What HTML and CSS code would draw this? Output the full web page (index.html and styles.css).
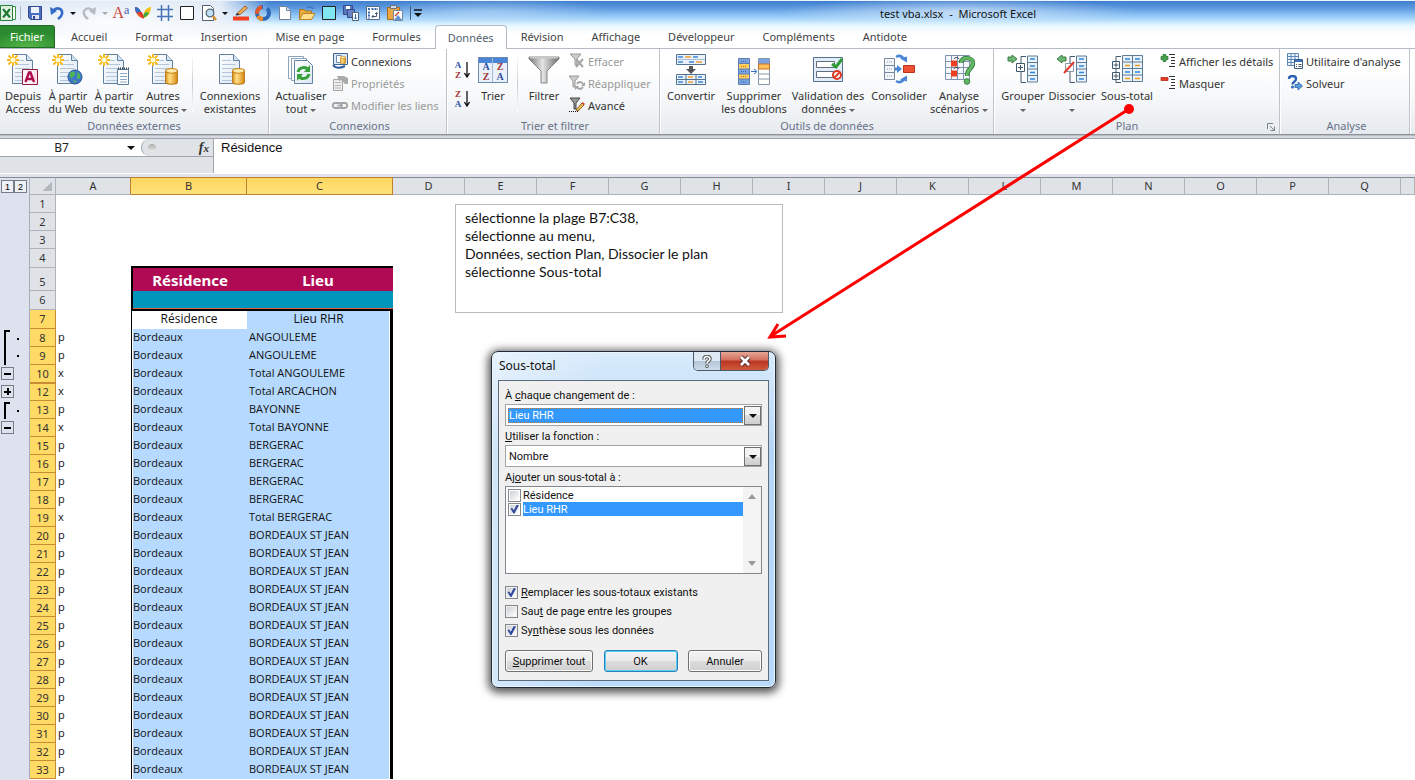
FILE: index.html
```html
<!DOCTYPE html>
<html lang="fr">
<head>
<meta charset="utf-8">
<title>test vba.xlsx - Microsoft Excel</title>
<link rel="stylesheet" href="styles.css">
</head>
<body>
<svg class="defs" aria-hidden="true">
  <defs>
    <linearGradient id="g-page" x1="0" y1="0" x2="1" y2="1"><stop offset="0" stop-color="#fff"/><stop offset="1" stop-color="#dbe7f3"/></linearGradient>
    <linearGradient id="g-gold" x1="0" x2="1" y1="0" y2="0"><stop offset="0" stop-color="#e09a20"/><stop offset=".35" stop-color="#ffe08a"/><stop offset="1" stop-color="#d88a10"/></linearGradient>
    <linearGradient id="g-grey" x1="0" x2="1" y1="0" y2="0"><stop offset="0" stop-color="#777"/><stop offset=".45" stop-color="#e4e4e4"/><stop offset="1" stop-color="#6c6c6c"/></linearGradient>
    <symbol id="page" viewBox="0 0 32 32">
      <path d="M5.500.5h14l6 6v23h-20z" fill="url(#g-page)" stroke="#64829f"/>
      <path d="M19.500.5v6h6" fill="#d5e3f0" stroke="#64829f"/>
      <path d="M8 6.500h9M8 10.500h14M8 14.500h14M8 18.500h14M8 22.500h14M8 26.500h14" stroke="#b3c6dc"/>
    </symbol>
    <symbol id="burst" viewBox="0 0 12 12">
      <path d="M6 0v12M0 6h12M1.500 1.500l9 9M10.500 1.500l-9 9" stroke="#f7b91c" stroke-width="2"/>
      <circle cx="6" cy="6" r="2.500" fill="#fffbd0"/>
    </symbol>
    <symbol id="drum" viewBox="0 0 12 16">
      <path d="M.5 2.500v11c0 2.500 11 2.500 11 0v-11z" fill="url(#g-gold)" stroke="#b87410"/>
      <ellipse cx="6" cy="2.700" rx="5.500" ry="2.200" fill="#ffe9a8" stroke="#c98518"/>
    </symbol>
    <symbol id="funnel" viewBox="0 0 32 32">
      <path d="M1 3h30v2L19 17v12h-6V17L1 5z" fill="url(#g-grey)" stroke="#888"/>
      <path d="M2 3.500h28" stroke="#c8c8c8" stroke-width="2"/>
    </symbol>
    <symbol id="rows" viewBox="0 0 11 27">
      <path d="M.5.5h10v26H.5zM.5 7h10M.5 13.500h10M.5 20h10" fill="#e9f1fa" stroke="#5f7c96"/>
      <path d="M3 3.500h5M3 10.500h5M3 17h5M3 23.500h5" stroke="#2f86dc" stroke-width="1.400"/>
    </symbol>
  </defs>
</svg>

<div class="app">
  <header class="top">
    <div class="titlebar">
      <nav class="quick" aria-label="Accès rapide">
        <button class="q first" aria-label="Excel"><svg width="16" height="16"><path d="M12 1.500h3.500v13H12z" fill="#fff" stroke="#3a9a46"/><path d="M.5.5h12v15H.5z" fill="#d9efd9" stroke="#2a8038"/><path d="M2.500 3.500l8 9.500M10.500 3.500l-8 9.500" stroke="#fff" stroke-width="4"/><path d="M3 4l7 8.500M10 4l-7 8.500" stroke="#1f7c35" stroke-width="2.400"/></svg></button>
        <i class="bar"></i>
        <button class="q" aria-label="Enregistrer"><svg width="16" height="16"><path d="M1.500 1.500h13v13h-11l-2-2z" fill="#4d6fc0" stroke="#31498c"/><path d="M4 2h8v6H4z" fill="#eef3fc"/><path d="M5 10h7v4H5z" fill="#dfe6f2"/><path d="M6 11h2v3H6z" fill="#31498c"/></svg></button>
        <button class="q split" aria-label="Annuler"><svg width="16" height="16"><path d="M4 6c4-5 10-2 9 3-.6 3-3 4-4 5" fill="none" stroke="#3469c6" stroke-width="2.600"/><path d="M1 2l1 8 6-4z" fill="#3469c6"/></svg><span class="caret dark"></span></button>
        <button class="q split" aria-label="Rétablir"><svg width="16" height="16"><path d="M12 6c-4-5-10-2-9 3 .6 3 3 4 4 5" fill="none" stroke="#b5bac2" stroke-width="2.400"/><path d="M15 2l-1 8-6-4z" fill="#b5bac2"/></svg><span class="caret pale"></span></button>
        <button class="q aa" aria-label="Police">A<sup>a</sup></button>
        <button class="q" aria-label="Papillon"><svg width="18" height="16"><path d="M8 13C4 12 0 6 1 2c4 0 6 4 7 8z" fill="#ee5a2a"/><path d="M1 2c3 0 5 2 6 5L3 8C1 6 1 4 1 2z" fill="#2f72c8"/><path d="M9 13c0-6 3-11 8-11 0 4-2 10-8 11z" fill="#f5c21b"/><path d="M9 13c3-1 5-3 6-5l-3-1c-2 1-3 3-3 6z" fill="#3da645"/><path d="M4 7l5 7 1-1-2-6z" fill="#e0352a"/></svg></button>
        <button class="q" aria-label="Quadrillage"><svg width="16" height="16"><path d="M4.500 0v16M11.500 0v16M0 4.500h16M0 11.500h16" stroke="#4475b5" stroke-width="1.500"/></svg></button>
        <button class="q" aria-label="Bordure"><svg width="16" height="16"><path d="M1.500 1.500h13v13h-13z" fill="#fff" stroke="#222"/></svg></button>
        <button class="q split" aria-label="Aperçu"><svg width="16" height="16"><path d="M1.500.5h8l3 3v12h-11z" fill="#fff" stroke="#555f70"/><circle cx="9" cy="8" r="3.800" fill="#bfe0f7" stroke="#5a6675" stroke-width="1.300"/><path d="M12 11l3 4" stroke="#d89030" stroke-width="2.500"/></svg><span class="caret dark"></span></button>
        <button class="q" aria-label="Couleur"><svg width="18" height="16"><path d="M1 11.500h16v4H1z" fill="#f2401e"/><path d="M5 8.500L13 1l2.500 2L8 9.500z" fill="#f4b25a" stroke="#9a5e28"/><path d="M3.500 10.500l1.500-2.500 2.500 2z" fill="#222"/></svg></button>
        <button class="q" aria-label="Graphique"><svg width="18" height="16"><circle cx="9" cy="8" r="6" fill="none" stroke="#2d67b8" stroke-width="4"/><path d="M9 2a6 6 0 0 1 4 1.500" fill="none" stroke="#6aa5e4" stroke-width="4"/><path d="M9 14a6 6 0 0 1-5-3" fill="none" stroke="#f08a28" stroke-width="4"/><path d="M3.200 9A6 6 0 0 1 8 2" fill="none" stroke="#e2582a" stroke-width="4"/></svg></button>
        <button class="q" aria-label="Nouveau"><svg width="16" height="16"><path d="M2.500 1.500h7l4 4v9h-11z" fill="#fff" stroke="#71819a"/><path d="M9.500 1.500v4h4" fill="#dbe4ef" stroke="#71819a"/></svg></button>
        <button class="q" aria-label="Ouvrir"><svg width="18" height="16"><path d="M1.500 14V4.500h5l1 1.500h6V14z" fill="#e8a93c" stroke="#a87422"/><path d="M1.500 14.500L5 8.500h12l-3.500 6z" fill="#ffdf8c" stroke="#b98328"/><path d="M9 3c2-2 5-1 6 1" fill="none" stroke="#3f72c4" stroke-width="1.500"/></svg></button>
        <button class="q" aria-label="Remplissage"><svg width="16" height="16"><path d="M1.500 1.500h13v13h-13z" fill="#7fe6f2" stroke="#222"/></svg></button>
        <button class="q" aria-label="Enregistrer sous"><svg width="16" height="16"><path d="M.5.5h9v9h-9z" fill="#5a74b8" stroke="#33498a"/><path d="M3 1h4v3H3z" fill="#fff"/><path d="M4.500 4.500h7v8h-7z" fill="#6a83c4" stroke="#33498a"/><path d="M9.500 7.500h6v8h-6z" fill="#fff" stroke="#4d5f7a"/><path d="M12.500 9v5M11 12.500l1.500 1.500 1.500-1.500" stroke="#3268b8" fill="none"/></svg></button>
        <button class="q" aria-label="Tableau croisé"><svg width="16" height="16"><path d="M1.500 1.500h13v13h-13z" fill="#fff" stroke="#566a8c"/><path d="M3 4h2M6.500 4H13M4 6.500v7" stroke="#3c69ad" stroke-width="2" stroke-dasharray="2 1"/><path d="M7 11.500h4.500V8M10 9l1.500-1.500L13 9M8.500 10L7 11.500 8.500 13" fill="none" stroke="#475b7c"/></svg></button>
        <button class="q" aria-label="Coller"><svg width="16" height="16"><path d="M.5 2.500h12v12H.5z" fill="#e9a745" stroke="#a56c1e"/><path d="M3.500.5h6v3h-6z" fill="#d5dbe4" stroke="#687485"/><path d="M6.500 5.500h9v10h-9z" fill="#fff" stroke="#7486a0"/><path d="M7 15l4-5 4 5z" fill="#5f8fd0"/><path d="M8 11l4-4" stroke="#c94b32" stroke-width="1.500"/></svg></button>
        <i class="bar dark"></i>
        <button class="q more" aria-label="Personnaliser"><svg width="8" height="8"><path d="M0 1h8" stroke="#111" stroke-width="1.500"/><path d="M0 4h8L4 8z" fill="#111"/></svg></button>
      </nav>
      <h1 class="title">test vba.xlsx&nbsp; -&nbsp; Microsoft Excel</h1>
    </div>
    <nav class="tabs" aria-label="Ruban">
      <button class="tab file">Fichier</button>
      <button class="tab">Accueil</button>
      <button class="tab">Format</button>
      <button class="tab">Insertion</button>
      <button class="tab">Mise en page</button>
      <button class="tab">Formules</button>
      <button class="tab active">Données</button>
      <button class="tab">Révision</button>
      <button class="tab">Affichage</button>
      <button class="tab">Développeur</button>
      <button class="tab">Compléments</button>
      <button class="tab">Antidote</button>
    </nav>
  </header>

  <section class="ribbon">
    <div class="group g-ext">
      <div class="body">
        <button class="big w46"><svg width="32" height="32"><use href="#page"/><use href="#burst" width="12" height="12"/><path d="M15.500 15.500h15v15h-15z" fill="#fbe0ea" stroke="#8e1d40"/><path d="M16 16h11v14H16z" fill="#fff" opacity=".6"/><path d="M18.500 28L22 18.500h1.500L27 28M20 25h5.500" fill="none" stroke="#b00d4c" stroke-width="2.400"/></svg><span>Depuis<br>Access</span></button>
        <button class="big w44"><svg width="32" height="32"><use href="#page"/><use href="#burst" width="12" height="12"/><circle cx="23" cy="23" r="7" fill="#3f78c8" stroke="#2a559b"/><path d="M18 19c3-3 5-1 5 1s-2 2-3 4-3-2-2-5zM25 18c3 1 4 4 3 6s-3 1-3-1 1-3 0-5zM21 26l4 1-2 2z" fill="#4fb454"/></svg><span>À partir<br>du Web</span></button>
        <button class="big w48"><svg width="32" height="32"><use href="#page"/><use href="#burst" width="12" height="12"/><path d="M19.500 15.500h11v15h-11z" fill="#fff" stroke="#5f7f9f"/><path d="M22 19.500h7M22 22.500h7M22 25.500h7M22 28h7" stroke="#8ba6c4"/><path d="M20 14.500h11" stroke="#444" stroke-width="2" stroke-dasharray="1 1"/></svg><span>À partir<br>du texte</span></button>
        <button class="big w50"><svg width="32" height="32"><use href="#page"/><use href="#burst" width="12" height="12"/><use href="#drum" x="18" y="14" width="13" height="17"/></svg><span>Autres<br>sources <i class="caret"></i></span></button>
        <i class="sep"></i>
        <button class="big w66"><svg width="32" height="32"><use href="#page"/><use href="#drum" x="18" y="14" width="13" height="17"/></svg><span>Connexions<br>existantes</span></button>
      </div>
      <h2>Données externes</h2>
    </div>

    <div class="group g-cnx">
      <div class="body">
        <button class="big w56"><svg width="32" height="32"><path d="M3.500 2.500h15v22h-15z" fill="#fff" stroke="#8ca2ba"/><path d="M6.500 4.500h15v22h-15z" fill="#fff" stroke="#8ca2ba"/><path d="M9.500 6.500h13l5 5v18h-18z" fill="url(#g-page)" stroke="#64829f"/><path d="M13 18c1-5 8-6 10-2M24 20c-1 5-8 6-10 2" fill="none" stroke="#37a03a" stroke-width="3"/><path d="M25 11v7h-6zM12 27v-7h6z" fill="#37a03a"/></svg><span>Actualiser<br>tout <i class="caret"></i></span></button>
        <div class="stack">
          <button class="small"><svg width="16" height="16"><path d="M1.500.5h14v11h-14z" fill="#dce9f7" stroke="#3f6590"/><path d="M4.500 2.500h5v7h-5z" fill="#fff" stroke="#6c8db0"/><use href="#drum" x="8" y="3" width="6" height="8"/><path d="M1 12c3 4 8 3 12 1" fill="none" stroke="#2d5f9d" stroke-width="2"/></svg>Connexions</button>
          <button class="small" disabled><svg width="16" height="16"><path d="M1.500 4.500h9v11h-9z" fill="#eee" stroke="#a5a5a5"/><path d="M3 7.500h6M3 10.500h6M3 13h6" stroke="#b5b5b5"/><path d="M5 1h7l4 2v6h-3L9 5 7 6z" fill="#ababab"/></svg>Propriétés</button>
          <button class="small" disabled><svg width="16" height="16"><path d="M3 6h4c3 0 3 5 0 5H3C0 11 0 6 3 6M9 6h4c3 0 3 5 0 5H9" fill="none" stroke="#a3a3a3" stroke-width="1.800"/><path d="M5 8.500h6" stroke="#aaa" stroke-width="1.500"/></svg>Modifier les liens</button>
        </div>
      </div>
      <h2>Connexions</h2>
    </div>

    <div class="group g-sort">
      <div class="body">
        <div class="sorts">
          <button class="az" aria-label="Trier de A à Z"><span><b class="bl">A</b><b class="rd">Z</b></span><svg width="6" height="16"><path d="M3 0v14M.5 11L3 15l2.500-4" fill="none" stroke="#111" stroke-width="1.300"/></svg></button>
          <button class="az" aria-label="Trier de Z à A"><span><b class="rd">Z</b><b class="bl">A</b></span><svg width="6" height="16"><path d="M3 0v14M.5 11L3 15l2.500-4" fill="none" stroke="#111" stroke-width="1.300"/></svg></button>
        </div>
        <button class="big w40"><span class="azbox"><b class="bl">A</b><b class="rd">Z</b><b class="rd">Z</b><b class="bl">A</b></span><span>Trier</span></button>
        <i class="sep"></i>
        <button class="big w44"><svg width="32" height="32"><use href="#funnel"/></svg><span>Filtrer</span></button>
        <div class="stack">
          <button class="small" disabled><svg width="16" height="16"><path d="M1 1h11L8 6v6H6V6z" fill="#ccc" stroke="#999"/><path d="M7 6l7 8M14 6l-7 8" stroke="#a5a5a5" stroke-width="2"/></svg>Effacer</button>
          <button class="small" disabled><svg width="16" height="16"><path d="M0 1h10L6 6v6H4V6z" fill="#ccc" stroke="#999"/><path d="M8 9c2-3 5-2 6 0M14 12c-2 3-5 2-6 0" fill="none" stroke="#a5a5a5" stroke-width="2"/><path d="M16 7v4h-4zM6 15v-4h4z" fill="#a5a5a5"/></svg>Réappliquer</button>
          <button class="small"><svg width="16" height="16"><path d="M1 1h10L7 6v6H5V6z" fill="#999" stroke="#444"/><path d="M7 13l6-7 2 2-6 6z" fill="#f4c05a" stroke="#8c5c1c"/><path d="M13 6l1-1 2 2-1 1z" fill="#d8433a"/><path d="M0 14.500h10" stroke="#111" stroke-dasharray="1 1"/></svg>Avancé</button>
        </div>
      </div>
      <h2>Trier et filtrer</h2>
    </div>

    <div class="group g-tools">
      <div class="body">
        <button class="big w60"><svg width="32" height="32"><path d="M1.500.5h29v10h-29z" fill="#eaf2fb" stroke="#55718f"/><path d="M2 5.500h28" stroke="#a8bdd3"/><path d="M3 3h5M18 3h5M3 8h5M14 8h5" stroke="#3a87dc" stroke-width="1.500"/><path d="M10 3h6M21 8h6" stroke="#f0a030" stroke-width="1.500"/><path d="M14 12h4v3h3l-5 5-5-5h3z" fill="#555"/><path d="M1.500 20.500h29v10h-29zM1.500 25.500h29M11 20.500v10M21 20.500v10" fill="#eaf2fb" stroke="#55718f"/><path d="M3 23h5M23 23h4M3 28h5M23 28h5" stroke="#3a87dc" stroke-width="1.500"/><path d="M13 23h5M13 28h5" stroke="#f0a030" stroke-width="1.500"/></svg><span>Convertir</span></button>
        <button class="big w66"><svg width="32" height="32"><path d="M.5 4.500h11v26h-11z" fill="#7ba3e0" stroke="#5e7db0"/><path d="M1 10h10v5H1zM1 20h10v5H1z" fill="#ffd05c"/><path d="M.5 9.500h11M.5 15h11M.5 20h11M.5 25h11" stroke="#5e7db0"/><path d="M3 7.500h6M3 17.500h6M3 28h6" stroke="#3f62a8" stroke-dasharray="1 1"/><path d="M3 12.500h6M3 22.500h6" stroke="#b87a1c" stroke-dasharray="1 1"/><path d="M13 17.500h5M16 15l3 2.500-3 2.500" fill="none" stroke="#3771c8"/><path d="M20.500 4.500h11v26h-11z" fill="#fff" stroke="#8796a8"/><path d="M21 5h10v5H21z" fill="#7ba3e0"/><path d="M20.500 10h11v5h-11z" fill="#ffc05a" stroke="#c9702c"/><path d="M20.500 20h11M20.500 25h11" stroke="#8796a8"/></svg><span>Supprimer<br>les doublons</span></button>
        <button class="big w82"><svg width="32" height="32"><path d="M1.500 3.500h29v24h-29z" fill="#e3edf7" stroke="#55718f"/><path d="M4.500 7.500h18v6h-18zM4.500 17.500h18v6h-18z" fill="#fff" stroke="#5e6e80"/><path d="M20 10l4 3 6-8" fill="none" stroke="#2c9a35" stroke-width="3"/><circle cx="25" cy="21" r="4" fill="#fff" stroke="#dd3a24" stroke-width="2"/><path d="M22 24l6-6" stroke="#dd3a24" stroke-width="2"/></svg><span>Validation des<br>données <i class="caret"></i></span></button>
        <button class="big w60"><svg width="32" height="32"><path d="M1.500 4.500h10v21h-10zM1.500 11.500h10M1.500 18.500h10" fill="#f3f6fa" stroke="#7687a0"/><path d="M4 8h6M4 15h6M4 22h6" stroke="#8c9cb2" stroke-dasharray="1 1"/><path d="M12 13.500h2V11l5 4-5 4v-2.500h-2z" fill="#4b86d6"/><path d="M20.500 11.500h11v7h-11z" fill="#ef5135" stroke="#b83420"/><path d="M13 3c3-2 6-1 8 2M13 27c3 2 6 1 8-2" fill="none" stroke="#4b86d6" stroke-width="2.600"/><path d="M17 4.500l7-2v6zM17 25.500l7 2v-6z" fill="#4b86d6"/></svg><span>Consolider</span></button>
        <button class="big w60"><svg width="32" height="32"><path d="M2.500 1.500h24v24h-24zM2.500 7.500h24M2.500 13.500h24M2.500 19.500h24M8.500 1.500v24M14.500 1.500v24M20.500 1.500v24" fill="#f5f8fc" stroke="#8192ae"/><path d="M8 6.500h6v6H8zM8 16.500h6v6H8z" fill="#ee3f22"/><path d="M11 5c1-2 4-2 5 0M11 15c1-2 4-2 5 0" fill="none" stroke="#333"/><path d="M18 9c0-7 12-6 12 0 0 6-6 5-6 13" fill="none" stroke="#377f3a" stroke-width="4.500"/><path d="M18 9c0-7 12-6 12 0 0 6-6 5-6 13" fill="none" stroke="#62b966" stroke-width="2.800"/><circle cx="24" cy="27.500" r="2.800" fill="#62b966" stroke="#377f3a"/></svg><span>Analyse<br>scénarios <i class="caret"></i></span></button>
      </div>
      <h2>Outils de données</h2>
    </div>

    <div class="group g-plan">
      <div class="body">
        <button class="big w48"><svg width="32" height="32"><path d="M1 3h4V1l5 4-5 4V7H1z" fill="#6fb573" stroke="#3a7d40"/><path d="M19 2.500h-5v7M14 17v11.500h5" fill="none" stroke="#42596e"/><path d="M9.500 9.500h8v8h-8z" fill="#fff" stroke="#42596e"/><path d="M11 13.500h5M13.500 11v5" stroke="#42596e"/><use href="#rows" x="20" y="1" width="11" height="28"/></svg><span>Grouper<br><i class="caret"></i></span></button>
        <button class="big w50"><svg width="32" height="32"><path d="M10 3H6V1L1 5l5 4V7h4z" fill="#6fb573" stroke="#3a7d40"/><path d="M19 2.500h-5v7M14 17v11.500h5" fill="none" stroke="#42596e"/><path d="M9.500 9.500h8v8h-8z" fill="#fff" stroke="#8796a8"/><path d="M8 19L18 8" stroke="#e33a2b" stroke-width="2"/><use href="#rows" x="20" y="1" width="11" height="28"/></svg><span>Dissocier<br><i class="caret"></i></span></button>
        <button class="big w60"><svg width="32" height="32"><path d="M10 2.500H5v5M5 15v4M5 26v2.500h5" fill="none" stroke="#42596e"/><path d="M1.500 7.500h7v7h-7zM1.500 18.500h7v7h-7z" fill="#fff" stroke="#42596e"/><path d="M2.500 11h5M5 8.500v5M2.500 22h5M5 19.500v5" stroke="#42596e"/><path d="M11.500 1.500h20v26h-20zM11.500 8h20M11.500 14.500h20M11.500 21h20M21.500 1.500v26" fill="#e9f1fa" stroke="#5f7c96"/><path d="M14 5h5M24 5h5M14 18h5M24 18h5" stroke="#2f86dc" stroke-width="1.400"/><path d="M14 11.500h5M24 11.500h5M14 24.500h5M24 24.500h5" stroke="#eb9b24" stroke-width="1.600"/></svg><span>Sous-total</span></button>
        <div class="stack">
          <button class="small"><svg width="16" height="16"><path d="M3 1.500h3v2h2v3H6v2H3v-2H1v-3h2z" fill="#4aa24d" stroke="#2f7a36" stroke-width=".8"/><path d="M9 1.500h6M11 4.500h4M11 7.500h4M11 10.500h4M9 13.500h6" stroke="#333"/></svg>Afficher les détails</button>
          <button class="small"><svg width="16" height="16"><path d="M1 2.500h7v3H1z" fill="#e83a24" stroke="#b12a1a" stroke-width=".8"/><path d="M9 1.500h6M11 4.500h4M11 7.500h4M11 10.500h4M9 13.500h6" stroke="#333"/></svg>Masquer</button>
        </div>
      </div>
      <h2>Plan</h2>
      <button class="launch" aria-label="Paramètres du plan"><svg width="8" height="8"><path d="M.5 6V.5H6M3 3l4 4M7.500 3.500v4h-4" fill="none" stroke="#7c8490"/></svg></button>
    </div>

    <div class="group g-ana">
      <div class="body">
        <div class="stack">
          <button class="small"><svg width="16" height="16"><path d="M.5.5h11v12H.5zM.5 3.500h11M.5 6.500h11M.5 9.500h11M4 .5v12M8 .5v12" fill="#eff5fc" stroke="#5f86b5"/><path d="M7.500 6.500h8v9h-8z" fill="#fff" stroke="#3a5f8f"/><path d="M8 8h7" stroke="#3a6fc0" stroke-width="2"/><path d="M9 11.500h1M11.500 11.500h3M9 13.500h1M11.500 13.500h3" stroke="#555"/></svg>Utilitaire d'analyse</button>
          <button class="small"><svg width="16" height="16"><path d="M2 4c0-4 7-4 7 0 0 3-3.500 2.500-3.500 5.500" fill="none" stroke="#2c62b5" stroke-width="2.400"/><circle cx="5.500" cy="12" r="1.500" fill="#2c62b5"/><path d="M8 9.500h3V7l4.500 4-4.500 4v-2.500H8z" fill="#5b9be0" stroke="#2a5ca5" stroke-width=".8"/></svg>Solveur</button>
        </div>
      </div>
      <h2>Analyse</h2>
    </div>
  </section>

  <section class="formula">
    <div class="namebox">
      <input type="text" value="B7" aria-label="Zone Nom">
      <span class="caret dark"></span>
      <div class="fx"><i></i><button aria-label="Insérer une fonction"><em>f</em><small>x</small></button></div>
    </div>
    <input class="fbar" type="text" value="Résidence" aria-label="Barre de formule">
  </section>

  <main class="sheet">
    <table class="grid">
      <colgroup><col class="c-out"><col class="c-num"><col class="c-a"><col class="c-b"><col class="c-c"><col class="c-s" span="14"><col></colgroup>
      <thead>
        <tr><th class="levels"><div><button>1</button><button>2</button></div></th><th class="corner"></th><th class="pre">A</th><th class="on">B</th><th class="on">C</th><th>D</th><th>E</th><th>F</th><th>G</th><th>H</th><th>I</th><th>J</th><th>K</th><th>L</th><th>M</th><th>N</th><th>O</th><th>P</th><th>Q</th><th></th></tr>
      </thead>
      <tbody>
        <tr><td class="out"></td><th>1</th><td colspan="3"></td><td colspan="15"></td></tr>
        <tr><td class="out"></td><th>2</th><td colspan="3"></td><td colspan="15"></td></tr>
        <tr><td class="out"></td><th>3</th><td colspan="3"></td><td colspan="15"></td></tr>
        <tr class="h19"><td class="out"></td><th>4</th><td></td><td colspan="2" class="edge"></td><td colspan="15"></td></tr>
        <tr class="h23"><td class="out"></td><th>5</th><td></td><td class="hd left">Résidence</td><td class="hd lieu">Lieu</td><td colspan="15"></td></tr>
        <tr class="h19"><td class="out"></td><th>6</th><td></td><td class="teal left"></td><td class="teal"></td><td colspan="15"></td></tr>
        <tr class="h19 sel lead"><td class="out"></td><th>7</th><td></td><td>Résidence</td><td>Lieu RHR</td><td colspan="15"></td></tr>
        <tr class="sel"><td class="out"><div class="br start"><i></i></div></td><th>8</th><td>p</td><td>Bordeaux</td><td>ANGOULEME</td><td colspan="15"></td></tr>
        <tr class="sel"><td class="out"><div class="br"><i></i></div></td><th>9</th><td>p</td><td>Bordeaux</td><td>ANGOULEME</td><td colspan="15"></td></tr>
        <tr class="sel"><td class="out"><button class="pm" aria-label="Réduire"></button></td><th>10</th><td>x</td><td>Bordeaux</td><td>Total ANGOULEME</td><td colspan="15"></td></tr>
        <tr class="sel"><td class="out"><button class="pm plus" aria-label="Développer"></button></td><th class="cut">12</th><td>x</td><td>Bordeaux</td><td>Total ARCACHON</td><td colspan="15"></td></tr>
        <tr class="sel"><td class="out"><div class="br start"><i></i></div></td><th>13</th><td>p</td><td>Bordeaux</td><td>BAYONNE</td><td colspan="15"></td></tr>
        <tr class="sel"><td class="out"><button class="pm" aria-label="Réduire"></button></td><th>14</th><td>x</td><td>Bordeaux</td><td>Total BAYONNE</td><td colspan="15"></td></tr>
        <tr class="sel"><td class="out"></td><th>15</th><td>p</td><td>Bordeaux</td><td>BERGERAC</td><td colspan="15"></td></tr>
        <tr class="sel"><td class="out"></td><th>16</th><td>p</td><td>Bordeaux</td><td>BERGERAC</td><td colspan="15"></td></tr>
        <tr class="sel"><td class="out"></td><th>17</th><td>p</td><td>Bordeaux</td><td>BERGERAC</td><td colspan="15"></td></tr>
        <tr class="sel"><td class="out"></td><th>18</th><td>p</td><td>Bordeaux</td><td>BERGERAC</td><td colspan="15"></td></tr>
        <tr class="sel"><td class="out"></td><th>19</th><td>x</td><td>Bordeaux</td><td>Total BERGERAC</td><td colspan="15"></td></tr>
        <tr class="sel"><td class="out"></td><th>20</th><td>p</td><td>Bordeaux</td><td>BORDEAUX ST JEAN</td><td colspan="15"></td></tr>
        <tr class="sel"><td class="out"></td><th>21</th><td>p</td><td>Bordeaux</td><td>BORDEAUX ST JEAN</td><td colspan="15"></td></tr>
        <tr class="sel"><td class="out"></td><th>22</th><td>p</td><td>Bordeaux</td><td>BORDEAUX ST JEAN</td><td colspan="15"></td></tr>
        <tr class="sel"><td class="out"></td><th>23</th><td>p</td><td>Bordeaux</td><td>BORDEAUX ST JEAN</td><td colspan="15"></td></tr>
        <tr class="sel"><td class="out"></td><th>24</th><td>p</td><td>Bordeaux</td><td>BORDEAUX ST JEAN</td><td colspan="15"></td></tr>
        <tr class="sel"><td class="out"></td><th>25</th><td>p</td><td>Bordeaux</td><td>BORDEAUX ST JEAN</td><td colspan="15"></td></tr>
        <tr class="sel"><td class="out"></td><th>26</th><td>p</td><td>Bordeaux</td><td>BORDEAUX ST JEAN</td><td colspan="15"></td></tr>
        <tr class="sel"><td class="out"></td><th>27</th><td>p</td><td>Bordeaux</td><td>BORDEAUX ST JEAN</td><td colspan="15"></td></tr>
        <tr class="sel"><td class="out"></td><th>28</th><td>p</td><td>Bordeaux</td><td>BORDEAUX ST JEAN</td><td colspan="15"></td></tr>
        <tr class="sel"><td class="out"></td><th>29</th><td>p</td><td>Bordeaux</td><td>BORDEAUX ST JEAN</td><td colspan="15"></td></tr>
        <tr class="sel"><td class="out"></td><th>30</th><td>p</td><td>Bordeaux</td><td>BORDEAUX ST JEAN</td><td colspan="15"></td></tr>
        <tr class="sel"><td class="out"></td><th>31</th><td>p</td><td>Bordeaux</td><td>BORDEAUX ST JEAN</td><td colspan="15"></td></tr>
        <tr class="sel"><td class="out"></td><th>32</th><td>p</td><td>Bordeaux</td><td>BORDEAUX ST JEAN</td><td colspan="15"></td></tr>
        <tr class="sel"><td class="out"></td><th>33</th><td>p</td><td>Bordeaux</td><td>BORDEAUX ST JEAN</td><td colspan="15"></td></tr>
      </tbody>
    </table>
    <div class="note">
      <p>sélectionne la plage B7:C38,</p>
      <p>sélectionne au menu,</p>
      <p>Données, section Plan, Dissocier le plan</p>
      <p>sélectionne Sous-total</p>
    </div>
  </main>

  <form class="dialog" role="dialog" aria-labelledby="dlg">
    <div class="dlg-top">
      <h2 id="dlg">Sous-total</h2>
      <div class="winbtns">
        <button type="button" class="help" aria-label="Aide"><svg width="12" height="13"><path d="M3 4.500c0-4 6-4 6-.5 0 2-3 2-3 4.500" fill="none" stroke="#555" stroke-width="3.600"/><path d="M3 4.500c0-4 6-4 6-.5 0 2-3 2-3 4.500" fill="none" stroke="#fff" stroke-width="1.600"/><circle cx="6" cy="11.200" r="1.400" fill="#fff" stroke="#555"/></svg></button>
        <button type="button" class="close" aria-label="Fermer"><svg width="14" height="12"><path d="M3 2l8 8M11 2l-8 8" stroke="#5b3030" stroke-width="4.600"/><path d="M3 2l8 8M11 2l-8 8" stroke="#fff" stroke-width="2.600"/></svg></button>
      </div>
    </div>
    <div class="dlg-body">
      <label for="chg">À <u>c</u>haque changement de :</label>
      <div class="combo focus"><select id="chg"><option>Lieu RHR</option></select><span><i class="caret dark"></i></span></div>
      <label for="fn"><u>U</u>tiliser la fonction :</label>
      <div class="combo"><select id="fn"><option>Nombre</option></select><span><i class="caret dark"></i></span></div>
      <div class="lbl" id="add">Aj<u>o</u>uter un sous-total à :</div>
      <div class="list" role="group" aria-labelledby="add">
        <div class="items">
          <div class="item"><input type="checkbox" id="i1"><label for="i1">Résidence</label></div>
          <div class="item on"><input type="checkbox" id="i2" checked><label for="i2">Lieu RHR</label></div>
        </div>
        <div class="scroll"><svg width="8" height="5"><path d="M0 5l4-5 4 5z" fill="#999"/></svg><svg width="8" height="5"><path d="M0 0l4 5 4-5z" fill="#999"/></svg></div>
      </div>
      <div class="opts">
        <div class="opt"><input type="checkbox" id="o1" checked><label for="o1"><u>R</u>emplacer les sous-totaux existants</label></div>
        <div class="opt"><input type="checkbox" id="o2"><label for="o2">Sau<u>t</u> de page entre les groupes</label></div>
        <div class="opt"><input type="checkbox" id="o3" checked><label for="o3">Sy<u>n</u>thèse sous les données</label></div>
      </div>
      <div class="acts">
        <button type="button" class="wide"><u>S</u>upprimer tout</button>
        <button type="button" class="ok">OK</button>
        <button type="button">Annuler</button>
      </div>
    </div>
  </form>

  <svg class="arrow" width="380" height="250" aria-hidden="true">
    <path d="M369 9L11 236M18 224L10 237l16-1" fill="none" stroke="#f00" stroke-width="3"/>
    <circle cx="369" cy="9" r="5" fill="#f00"/>
  </svg>
</div>
</body>
</html>
```
FILE: styles.css
```css
* { box-sizing: border-box; }
body { margin: 0; font-family: "Noto Sans", sans-serif; font-size: 11px; color: #333; }
button, input, select { font: inherit; color: inherit; margin: 0; padding: 0; border: 0; background: none; }
h1, h2, p { margin: 0; font-weight: normal; }
i { font-style: normal; }
svg { flex: none; display: block; }
.defs { position: absolute; width: 0; height: 0; }
.app { position: relative; display: flex; flex-direction: column; height: 100vh; overflow: hidden; background: #fff; }

.caret { display: inline-block; flex: none; border: 3px solid transparent; border-top-color: #666; border-bottom: 0; vertical-align: middle; }
.caret.dark { border-top-color: #111; border-width: 4px 4px 0; }
.caret.pale { border-top-color: #aaa; }

.top {
  background:
    linear-gradient(rgba(255,255,255,0) 20px, #fff 40px),
    radial-gradient(180px 30px at 110px 22px, rgba(255,255,255,.9), rgba(255,255,255,0)),
    linear-gradient(90deg, #d5e2f2, #dfe9f6 220px, rgba(223,233,246,0) 270px),
    radial-gradient(120px 14px at 490px 12px, rgba(200,225,250,.5), rgba(200,225,250,0)),
    radial-gradient(180px 14px at 960px 12px, rgba(225,238,252,.7), rgba(225,238,252,0)),
    linear-gradient(#3a7bcb, #5c98de 8px, #93c8f6 16px, #d8f2ff 25px, #fff 36px);
}
.titlebar { display: flex; align-items: center; height: 25px; border-top: 1px solid #eef4fb; }
.quick { display: flex; align-items: center; flex: none; }
.q { display: flex; align-items: center; justify-content: center; width: 22px; height: 22px; }
.q.first { width: 18px; justify-content: flex-start; }
.q.split { width: 32px; gap: 5px; }
.q.split .caret { border-width: 3px 3px 0; }
.q.more { width: 14px; }
.q.aa { align-items: flex-start; font: 16px/22px "Liberation Serif", serif; color: #c5483b; }
.q.aa sup { font-size: 12px; color: #3b62ad; line-height: 16px; }
.bar { width: 1px; height: 14px; margin: 0 3px 0 2px; background: #a9b6c8; }
.bar.dark { background: #4a5d78; margin: 0 0 0 4px; }
.title { flex: 1; padding-left: 76px; text-align: center; font-size: 11px; color: #111; }
.tabs { display: flex; height: 24px; padding-right: 8px; border-bottom: 1px solid #b4bac4; }
.tab { height: 23px; padding: 0 14px; white-space: nowrap; color: #444; }
.tab.file { width: 55px; padding: 0; margin-right: 2px; color: #fff; border-radius: 0 3px 0 0; background: radial-gradient(40px 16px at 50% 100%, #55b648, #2b8a2f); border: 1px solid #1f6d25; border-left: 0; }
.tab.active { height: 24px; padding: 0 12px; border: 1px solid #b4bac4; border-bottom: 0; border-radius: 4px 4px 0 0; background: #fff; color: #555e70; }

.ribbon { display: flex; height: 86px; background: linear-gradient(#fff 20%, #f5f7f9 60%, #e6eaee); border-bottom: 1px solid #8c9197; box-shadow: 0 1px #b9bdc4; position: relative; white-space: nowrap; overflow: hidden; }
.group { position: relative; flex: none; display: flex; flex-direction: column; border-right: 1px solid #c0c4ca; box-shadow: 1px 0 #fff; }
.g-ext { width: 269px; }
.g-cnx { width: 178px; padding-left: 4px; }
.g-sort { width: 213px; padding-left: 4px; }
.g-tools { width: 334px; padding-left: 1px; }
.g-plan { width: 286px; padding-left: 5px; }
.g-plan h2 { padding-right: 24px; }
.g-ana { width: 130px; padding-left: 4px; }
.body { display: flex; flex: 1; }
.group h2 { height: 16px; line-height: 15px; font-size: 11px; text-align: center; color: #68718a; }
.big { display: flex; flex-direction: column; align-items: center; gap: 3px; padding-top: 5px; line-height: 13px; text-align: center; }
.big span { flex: none; }
.w40 { width: 40px; } .w44 { width: 44px; } .w46 { width: 46px; } .w48 { width: 48px; } .w50 { width: 50px; } .w56 { width: 56px; }
.w60 { width: 60px; } .w66 { width: 66px; } .w82 { width: 82px; }
.sep { width: 1px; margin: 6px 4px; background: linear-gradient(#fff, #c8ccd2, #fff); }
.stack { display: flex; flex-direction: column; padding: 1px 0 0 3px; }
.small { display: flex; align-items: center; gap: 3px; height: 22px; }
.small:disabled { color: #999; }
.bl { color: #2d4f9e; } .rd { color: #a03434; }
.sorts { display: flex; flex-direction: column; gap: 9px; padding: 11px 0 0 3px; width: 22px; }
.az { display: flex; align-items: center; gap: 2px; height: 20px; }
.az span { display: flex; flex-direction: column; width: 8px; }
.az b { font: bold 9px/10px "Liberation Serif", serif; }
.azbox { display: grid; grid-template-columns: 1fr 1fr; width: 30px; height: 26px; margin: 3px 0; padding-top: 4px; border: 1px solid #6f8ab0; background: linear-gradient(90deg, transparent 13px, #a8b8cf 13px, #a8b8cf 14px, transparent 14px), linear-gradient(#4a86d8 5px, #eaf1fa 5px); }
.azbox b { font: bold 10px/10px "Liberation Serif", serif; }
.launch { position: absolute; right: 4px; bottom: 3px; }

.formula { display: flex; height: 39px; padding-top: 3px; background: #d4d9e2; border-bottom: 2px solid #fff; box-shadow: inset 0 -1px #9fa4ab; }
.namebox { display: flex; align-items: center; width: 213px; height: 19px; flex: none; border: solid #a0a5ad; border-width: 1px 0; background: #fff; box-shadow: 0 16px #dfe3e8; }
.namebox input { width: 127px; padding-left: 0; padding-right: 4px; text-align: center; font-size: 12px; color: #222; }
.fx { flex: 1; display: flex; align-items: center; justify-content: space-between; height: 17px; margin-left: 6px; padding: 0 4px 0 6px; border-radius: 9px 0 0 9px; border-left: 1px solid #9da2a9; background: #dfe3e8; }
.fx i { width: 8px; height: 8px; border-radius: 4px; background: linear-gradient(#aaa, #eee); }
.fx button { font: bold 14px/16px "Liberation Serif", serif; color: #333; }
.fx small { font: italic bold 11px/8px "Liberation Serif", serif; }
.fbar { flex: 1; min-width: 0; height: 35px; padding: 0 7px 17px; border-left: 1px solid #a0a5ad; border-top: 1px solid #a0a5ad; background: #fff; font: 13px "Liberation Sans", sans-serif; color: #111; }

.sheet { position: relative; flex: 1; overflow: hidden; border-top: 3px solid #e0e3ee; background: linear-gradient(90deg, #dee2ef 29px, #fff 29px); }
.grid { width: 100%; table-layout: fixed; border-collapse: separate; border-spacing: 0; }
.c-out { width: 30px; } .c-num { width: 26px; } .c-a { width: 75px; } .c-b { width: 116px; } .c-c { width: 146px; } .c-s { width: 72px; }
.grid th { padding: 0; font-size: 11px; font-weight: normal; line-height: 16px; color: #333; background: #dfe3e8; border: solid #aeb3b9; border-width: 0 1px 1px 0; }
.grid thead th { height: 18px; border-top: 1px solid #858b93; }
.grid thead .on { background: linear-gradient(#ffd660, #ffe27a); border-color: #c08030; }
.grid thead .pre { border-right-color: #c08030; }
.grid thead .levels { background: #dee2ef; border-bottom: 0; }
.levels div { display: flex; padding-left: 1px; }
.levels button { width: 13px; height: 13px; border: 1px solid #777d88; font: 9px/10px "Liberation Sans", sans-serif; color: #000; background: #eef0f6; }
.grid thead .corner { background: linear-gradient(135deg, #dfe3e8 50%, #b3b8be 50%) 13px 4px / 9px 9px no-repeat #dfe3e8; }
.grid tbody tr { height: 18px; }
.grid tbody .h19 { height: 19px; }
.grid tbody .h23 { height: 23px; }
.grid tbody .h23 th { vertical-align: bottom; }
.grid td { padding: 0 2px 2px; font: 11px/16px "Open Sans", sans-serif; color: #111; white-space: nowrap; overflow: hidden; }
.grid .sel th { background: #ffda64; border-color: #c78c34; }
.grid .sel .cut { box-shadow: inset 0 1px #c78c34; }
.grid .out { padding: 0; border-right: 1px solid #a6abb5; vertical-align: top; }
.grid .edge { padding: 0; border-bottom: 2px solid #000; }
.grid .hd { padding: 0 2px; background: #b00a54; color: #fff; font: bold 15px/22px "Noto Sans", sans-serif; text-align: center; }
.grid .lieu { padding-right: 6px; }
.grid .left { border-left: 2px solid #000; }
.grid .teal { background: #0096bc; border-bottom: 1px solid #000; box-shadow: inset 0 -1px #e0603c; }
.grid .sel td:nth-child(4) { background: #b5d9ff; border-left: 1px solid #000; padding-left: 1px; box-shadow: inset 1px 0 #fff; }
.grid .sel td:nth-child(5) { background: #b5d9ff; border-right: 3px solid #000; padding-left: 2px; box-shadow: inset -1px 0 #fff; }
.grid .lead td:nth-child(4), .grid .lead td:nth-child(5) { border-top: 1px solid #000; text-align: center; font-size: 12px; }
.grid .lead td:nth-child(4) { background: #fff; }
.br { display: flex; align-items: center; width: 15px; height: 18px; margin-left: 4px; border-left: 2px solid #000; }
.br.start { height: 17px; margin-top: 1px; background: linear-gradient(#000, #000) 0 0 / 4px 2px no-repeat; }
.br i { width: 2px; height: 2px; margin-left: auto; background: #000; }
.pm { display: block; width: 13px; height: 13px; margin: 2px 0 0 1px; border: 1px solid #777d88; background: linear-gradient(#000, #000) center / 7px 2px no-repeat; }
.pm.plus { background: linear-gradient(#000, #000) center / 7px 2px no-repeat, linear-gradient(#000, #000) center / 2px 7px no-repeat; }

.note { position: absolute; left: 455px; top: 27px; width: 328px; height: 109px; padding: 4px 9px; border: 1px solid #bcbcbc; background: #fff; font: 14px/18px Lato, sans-serif; color: #111; }

.dialog { position: absolute; left: 491px; top: 351px; width: 285px; height: 337px; padding: 0 6px 6px; border: 1px solid #222b35; border-radius: 7px; background: linear-gradient(90deg, rgba(255,255,255,.4), rgba(255,255,255,0) 40%), linear-gradient(#d9ebfc, #b4d5f5 30%, #b9dafa); box-shadow: inset 0 0 0 1px #e9f5ff, 0 2px 9px 3px rgba(0,0,0,.65); font: 11px Roboto, sans-serif; color: #111; display: flex; flex-direction: column; }
.dlg-top { display: flex; justify-content: space-between; height: 28px; padding-left: 1px; }
.dlg-top h2 { font: 12px/28px "Noto Sans", sans-serif; }
.winbtns { display: flex; height: 19px; border: 1px solid #4b5a6a; border-top: 0; border-radius: 0 0 5px 5px; overflow: hidden; }
.winbtns button { display: flex; align-items: center; justify-content: center; }
.winbtns .help { width: 27px; background: linear-gradient(#dde8f3 50%, #b3c4d6 50%, #cddcea); border-right: 1px solid #4b5a6a; }
.close { width: 47px; background: linear-gradient(#e4a696, #d3705c 45%, #b93522 50%, #cf5a3c); }
.dlg-body { flex: 1; display: flex; flex-direction: column; padding: 6px; border: 1px solid #5f6b78; background: #f0f0f0; }
.dlg-body > label, .lbl { height: 17px; line-height: 17px; }
.combo { display: flex; height: 22px; margin-bottom: 2px; padding: 1px 0 0 1px; border: 1px solid #a3a3a3; background: #fff; }
.combo select { flex: 1; min-width: 0; margin: 2px 1px; padding: 0; appearance: none; border: 1px solid transparent; }
.combo.focus select { background: #3399ff; color: #fff; border: 1px dotted #c87828; }
.combo span { width: 17px; display: flex; align-items: center; justify-content: center; border: 1px solid #707070; background: linear-gradient(#f3f3f3 50%, #ddd 50%, #cfcfcf); }
.list { display: flex; height: 88px; border: 1px solid #828790; background: #fff; }
.items { flex: 1; padding: 1px 0 0 2px; }
.item { display: flex; height: 14px; gap: 2px; align-items: center; }
.item label { flex: 1; height: 14px; line-height: 15px; }
.item.on label { background: #3399ff; color: #fff; }
.scroll { width: 18px; display: flex; flex-direction: column; justify-content: space-between; align-items: center; padding: 7px 0; background: #f3f3f3; }
input[type="checkbox"] { appearance: none; flex: none; width: 13px; height: 13px; border: 1px solid #858789; background: linear-gradient(135deg, #ccd0d5, #fff) content-box #f4f4f4; padding: 1px; }
input[type="checkbox"]:checked::before { content: ""; display: block; width: 9px; height: 9px; background: #31499a; clip-path: polygon(5% 45%, 25% 40%, 42% 65%, 75% 0, 100% 5%, 50% 100%, 38% 100%); }
.opts { margin-top: 9px; }
.opt { display: flex; align-items: center; gap: 3px; height: 19px; }
.acts { display: flex; justify-content: space-between; margin-top: 10px; }
.acts button { width: 74px; height: 22px; border: 1px solid #707070; border-radius: 3px; background: linear-gradient(#f3f3f3, #ebebeb 50%, #ddd 50%, #cfcfcf); box-shadow: inset 0 0 0 1px #fbfbfb; }
.acts .wide { width: 88px; }
.acts .ok { border-color: #2f7fb8; box-shadow: inset 0 0 0 1px #4fd2f5; }

.arrow { position: absolute; left: 760px; top: 100px; pointer-events: none; }
```
